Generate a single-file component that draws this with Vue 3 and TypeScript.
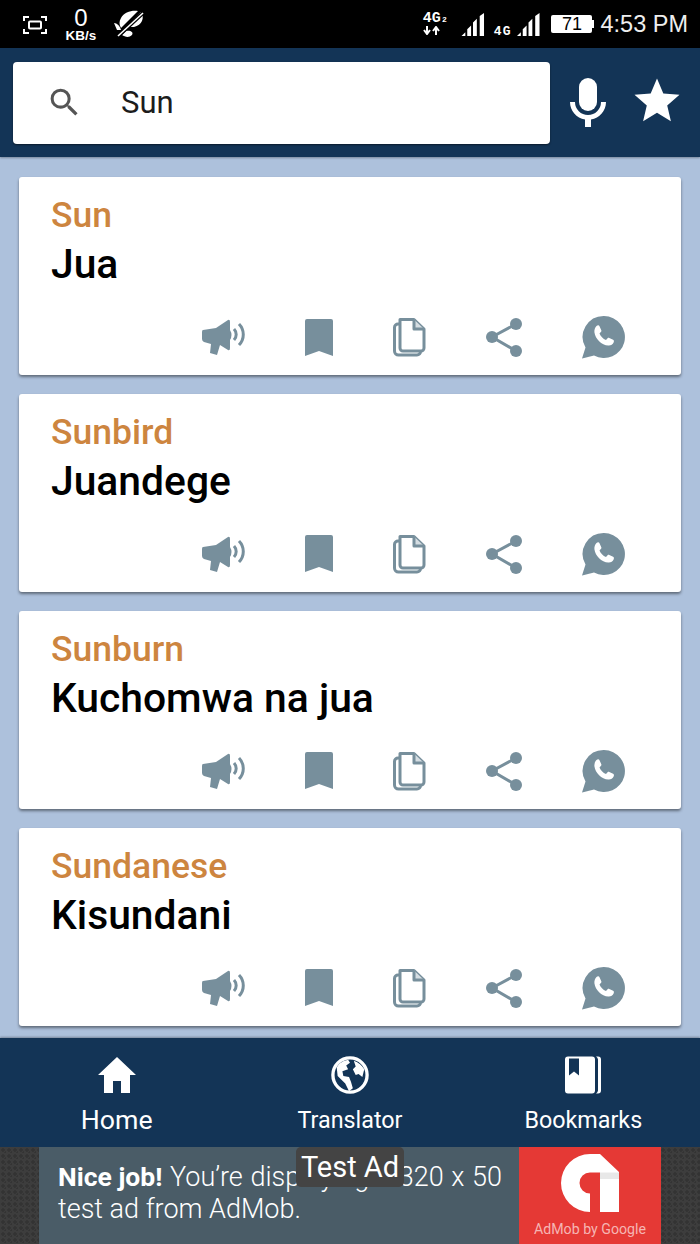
<script setup lang="ts">
const cards = [
  { en: 'Sun', sw: 'Jua' },
  { en: 'Sunbird', sw: 'Juandege' },
  { en: 'Sunburn', sw: 'Kuchomwa na jua' },
  { en: 'Sundanese', sw: 'Kisundani' },
]
</script>

<template>
  <div class="page">
    <div class="status">
      <svg class="st-shot" viewBox="0 0 24 20" width="24" height="20" fill="none" stroke="#fff" stroke-width="2">
        <path d="M1 6V2h5M18 2h5v4M23 14v4h-5M6 18H1v-4" />
        <rect x="6" y="6.5" width="12" height="7" rx="1" />
      </svg>
      <div class="st-speed"><b>0</b><span>KB/s</span></div>
      <svg class="st-leaf" viewBox="0 0 32 28" width="32" height="28">
        <path d="M8 8C11 2 19 0 25 1L8 18C6 15 6 11 8 8Z M28 2C32 8 29 15 21 17L14 17Z M1 13C4 13 7 16 8 20L4 20Z M13 21C17 20 21 22 19 25C16 28 12 27 9 25Z" fill="#fff" />
        <path d="M4 27L31 2" stroke="#000" stroke-width="4" />
        <path d="M5 26L30 3" stroke="#fff" stroke-width="1.6" />
      </svg>
      <div class="spacer"></div>
      <div class="st-net"><span>4G<i>2</i></span><svg viewBox="0 0 18 9" width="18" height="9" fill="none" stroke="#fff" stroke-width="2"><path d="M4 0V8M1 4L4 8L7 4" /><path d="M13 9V1M10 5L13 1L16 5" /></svg></div>
      <svg class="st-sig" viewBox="0 0 24 24" width="24" height="23" fill="#fff"><path d="M0 24L4 20V24Z M6 24V17L10 13V24Z M12 24V10L16 6V24Z M19 24V3L23.500 0V24Z" /></svg>
      <span class="st-4g">4G</span>
      <svg class="st-sig2" viewBox="0 0 24 24" width="23" height="23" fill="#fff"><path d="M0 24L4 20V24Z M6 24V17L10 13V24Z M12 24V10L16 6V24Z M19 24V3L23.500 0V24Z" /></svg>
      <div class="st-batt"><span>71</span></div>
      <span class="st-time">4:53 PM</span>
    </div>

    <header class="head">
      <div class="search">
        <svg viewBox="0 0 24 24" width="37" height="37" fill="#555"><path d="M15.500 14h-.79l-.28-.27A6.470 6.470 0 0 0 16 9.500 6.500 6.500 0 1 0 9.500 16c1.610 0 3.090-.59 4.230-1.570l.27.28v.79l5 4.990L20.490 19l-4.990-5zm-6 0C7.010 14 5 11.990 5 9.500S7.010 5 9.500 5 14 7.010 14 9.500 11.990 14 9.500 14z" /></svg>
        <span class="q">Sun</span>
      </div>
      <svg class="mic" viewBox="0 0 36 50" width="36" height="50" fill="#fff"><path d="M18 0a9 9 0 0 0-9 9v15a9 9 0 0 0 18 0V9a9 9 0 0 0-9-9Z" /><path d="M0 24h5a13 13 0 0 0 26 0h5c0 9-6.500 16-15 17.500V49h-6v-7.500C6.500 40 0 33 0 24Z" /></svg>
      <svg class="star" viewBox="0 0 24 24" width="54" height="54" fill="#fff"><path d="M12 17.270 18.180 21l-1.640-7.030L22 9.240l-7.190-.61L12 2 9.190 8.630 2 9.240l5.460 4.730L5.820 21z" /></svg>
    </header>

    <main class="list">
      <article v-for="c in cards" :key="c.en" class="card">
        <div class="en">{{ c.en }}</div>
        <div class="sw">{{ c.sw }}</div>
        <div class="acts">
          <svg class="a-speak" viewBox="0 0 44 38" width="44" height="38" fill="#778f9c">
            <path d="M1 12 L14 10 L26 2 Q28 1 28 4 V12 Q31 17 28 22 V30 Q28 33 26 32 L18 27 L15 37 L8 35 L9 26 L2 24 Q0 23 0 21 V14 Q0 12 1 12Z" />
            <path d="M32 11a8 8 0 0 1 0 11" fill="none" stroke="#778f9c" stroke-width="3" />
            <path d="M37 6a15 15 0 0 1 0 21" fill="none" stroke="#778f9c" stroke-width="3" />
          </svg>
          <svg class="a-mark" viewBox="0 0 28 37" width="28" height="37" fill="#778f9c"><path d="M2 0H26a2 2 0 0 1 2 2V37L14 32 0 37V2a2 2 0 0 1 2-2Z" /></svg>
          <svg class="a-copy" viewBox="0 0 33 40" width="33" height="40" fill="none" stroke="#778f9c" stroke-width="3" stroke-linejoin="round">
            <path d="M7 2.500H21L31 12V31a3 3 0 0 1-3 3H10a3 3 0 0 1-3-3Z" />
            <path d="M21 2.500V12H31" fill="#d5dde2" />
            <path d="M7 7H5a3.500 3.500 0 0 0-3.500 3.500V34a4 4 0 0 0 4 4H24a3.500 3.500 0 0 0 3.500-3.500" />
          </svg>
          <svg class="a-share" viewBox="0 0 38 40" width="38" height="40" fill="#778f9c">
            <circle cx="31" cy="7" r="6" /><circle cx="7" cy="20" r="6" /><circle cx="31" cy="34" r="6" />
            <path d="M31 7L7 20L31 34" fill="none" stroke="#778f9c" stroke-width="3" />
          </svg>
          <svg class="a-wa" viewBox="0 0 44 44" width="44" height="44">
            <path d="M23 1a21 21 0 1 1-10 39.500L1 43.500l3.500-11A21 21 0 0 1 23 1Z" fill="#778f9c" />
            <path d="M15.500 11c1-.8 2.500-1 3 .2l1.800 4c.3.700 0 1.300-.5 1.800l-1.300 1.400c1 2.800 3.500 5.300 6.500 6.600l1.600-1.800c.5-.5 1-.6 1.700-.3l3.800 1.900c1 .5 1 1.500.5 2.800-.8 2-3 3.200-5.200 3-7-.8-13-6.500-14-13.400-.2-2.400.600-4.700 2.100-6.200Z" fill="#fff" />
          </svg>
        </div>
      </article>
    </main>

    <nav class="nav">
      <div class="tab">
        <svg viewBox="0 0 38 36" width="38" height="36" fill="#fff"><path d="M19 0L38 18H32V36H23V24H15V36H6V18H0Z" /></svg>
        <span class="home">Home</span>
      </div>
      <div class="tab">
        <svg viewBox="0 0 40 40" width="40" height="40"><circle cx="20" cy="20" r="18" fill="none" stroke="#fff" stroke-width="3.500" /><path d="M6 12C9 7 13 5 18 4L20 7L16 10L18 14L12 16L13 21L19 22L21 27L23 34L19 37L15 29L7 21Z M24 5C29 7 33 10 35 14L33 22L29 19L26 20L23 14L26 11Z" fill="#fff" /></svg>
        <span>Translator</span>
      </div>
      <div class="tab">
        <svg viewBox="0 0 36 37" width="36" height="37" fill="#fff"><path d="M3 0H27a3 3 0 0 1 3 3V34a3 3 0 0 1-3 3H3a3 3 0 0 1-3-3V3a3 3 0 0 1 3-3ZM4 2V19L9 15L14 19V2Z" fill-rule="evenodd" /><path d="M31 0H33a3 3 0 0 1 3 3V34a3 3 0 0 1-3 3H31a4 4 0 0 0 2-3V3a4 4 0 0 0-2-3Z" /></svg>
        <span>Bookmarks</span>
      </div>
    </nav>

    <footer class="ad">
      <div class="ad-main">
        <div class="ad-copy">
          <div class="ad-line first"><b>Nice job!</b> You’re displaying a 320 x 50</div>
          <div class="ad-line">test ad from AdMob.</div>
        </div>
        <div class="ad-red">
          <svg viewBox="0 0 58 58" width="58" height="58">
            <path d="M29 0H39L58 18V58H39V18.500H29A10.500 10.500 0 0 0 29 39.500V58A29 29 0 0 1 29 0Z" fill="#fff" />
            <path d="M39 18.500H58V25H39Z" fill="#e8e8e8" />
          </svg>
          <span>AdMob by Google</span>
        </div>
      </div>
      <div class="ad-tag">Test Ad</div>
    </footer>
  </div>
</template>

<style>
html, body { margin: 0; background: #adc1dc; }
</style>

<style scoped>
.page {
  width: 700px;
  height: 1244px;
  display: flex;
  flex-direction: column;
  overflow: hidden;
  background: #adc1dc;
  font-family: Roboto, "Liberation Sans", sans-serif;
}
.status {
  height: 48px;
  flex: none;
  box-sizing: border-box;
  background: #000;
  color: #fff;
  display: flex;
  align-items: center;
  padding: 0 12px 0 23px;
}
.spacer { flex: 1; }
.st-speed {
  width: 34px;
  margin-left: 17px;
  display: flex;
  flex-direction: column;
  align-items: center;
  line-height: 1;
}
.st-speed b { font-size: 24px; font-weight: 400; height: 24px; line-height: 24px; font-family: "Liberation Sans", sans-serif; }
.st-speed span { font-size: 13.500px; line-height: 12px; font-weight: 700; font-family: "Liberation Sans", sans-serif; white-space: nowrap; }
.st-leaf { margin-left: 15px; margin-top: -1px; }
.st-shot { margin-top: 1px; }
.st-net { display: flex; flex-direction: column; align-items: flex-start; width: 28px; margin-top: -1px; }
.st-net span { font-size: 15px; line-height: 13px; font-weight: 700; font-family: "Liberation Mono", monospace; white-space: nowrap; }
.st-net i { font-size: 8px; font-style: normal; margin-left: 1px; }
.st-sig { margin-left: 10px; margin-top: 1px; }
.st-4g { font-size: 13px; font-weight: 700; margin: 14px 6px 0 9px; font-family: "Liberation Mono", monospace; letter-spacing: 1px; }
.st-sig2 { margin-top: 1px; }
.st-batt {
  width: 41px;
  height: 18px;
  margin-left: 11px;
  margin-right: 8px;
  background: #fff;
  border-radius: 2px;
  position: relative;
  color: #000;
  display: flex;
  align-items: center;
  justify-content: center;
  font-size: 18px;
  font-weight: 400;
  font-family: "Liberation Sans", sans-serif;
}
.st-batt span { line-height: 18px; }
.st-batt::after {
  content: "";
  position: absolute;
  right: -2px;
  top: 5px;
  width: 2px;
  height: 8px;
  background: #fff;
}
.st-time { font-size: 23.500px; font-family: "Liberation Sans", sans-serif; margin-top: 1px; color: #eee; white-space: nowrap; }
.head {
  height: 109px;
  flex: none;
  box-sizing: border-box;
  background: #133456;
  display: flex;
  align-items: center;
  padding: 0 13px;
  box-shadow: 0 1px 2px rgba(0, 0, 0, 0.3);
  position: relative;
  z-index: 1;
}
.search {
  width: 537px;
  height: 82px;
  box-sizing: border-box;
  background: #fff;
  border-radius: 4px;
  display: flex;
  align-items: center;
  padding-left: 33px;
  box-shadow: 0 1px 2px rgba(0, 0, 0, 0.5);
}
.q { margin-left: 38px; font-size: 31px; color: #1c1c1c; }
.mic { margin-left: 20px; }
.star { margin-left: 24px; margin-top: -3px; margin-right: -4px; }
.list {
  flex: 1;
  min-height: 0;
  padding: 20px 19px 0;
  display: flex;
  flex-direction: column;
  gap: 19.400px;
}
.card {
  height: 197.600px;
  flex: none;
  box-sizing: border-box;
  background: #fff;
  border-radius: 3px;
  padding: 18px 32px 0;
  box-shadow: 0 2px 3px rgba(0, 0, 0, 0.45);
  position: relative;
}
.en { font-size: 35.500px; line-height: 40px; font-weight: 500; color: #cd853f; }
.sw { font-size: 40.800px; line-height: 46px; font-weight: 500; color: #000; margin-top: 6px; }
.acts {
  position: absolute;
  left: 183px;
  top: 138px;
  display: flex;
  align-items: center;
}
.a-mark { margin-left: 59px; }
.a-copy { margin-left: 60px; }
.a-share { margin-left: 59px; }
.a-wa { margin-left: 58px; }
.nav {
  height: 109px;
  flex: none;
  background: #133456;
  display: grid;
  grid-template-columns: repeat(3, 1fr);
  box-shadow: 0 -1px 2px rgba(0, 0, 0, 0.3);
  position: relative;
}
.tab {
  display: flex;
  flex-direction: column;
  align-items: center;
  color: #fff;
  font-size: 23.300px;
  padding-top: 18px;
  box-sizing: border-box;
  position: relative;
}
.tab svg { height: 38px; }
.tab span { position: absolute; top: 67px; line-height: 30px; }
.tab .home { font-size: 26.700px; }
.ad {
  height: 97px;
  flex: none;
  position: relative;
  background-color: #3d3d3d;
  background-image:
    radial-gradient(circle at 3px 3px, #333 1.500px, transparent 2px),
    radial-gradient(circle at 6px 6px, #333 1.500px, transparent 2px);
  background-size: 6px 6px;
  display: flex;
  justify-content: center;
}
.ad-main {
  width: 622px;
  display: flex;
  background: #4a5c67;
  color: #fff;
}
.ad-copy { flex: 1; padding: 14px 0 0 19px; font-size: 27px; line-height: 32px; font-weight: 300; white-space: nowrap; overflow: hidden; }
.first { word-spacing: 1px; }
.ad-line b { font-weight: 700; font-size: 26.500px; word-spacing: 0; }
.ad-red {
  width: 142px;
  background: #e53935;
  display: flex;
  flex-direction: column;
  align-items: center;
  padding-top: 7px;
  box-sizing: border-box;
}
.ad-red span { font-size: 14.200px; line-height: 18px; margin-top: 8px; color: #f5b5b3; white-space: nowrap; }
.ad-tag {
  position: absolute;
  left: 296px;
  top: 0;
  width: 108px;
  height: 40px;
  background: #444;
  border-radius: 5px;
  color: #fff;
  font-size: 29px;
  line-height: 41px;
  text-align: center;
}
</style>
